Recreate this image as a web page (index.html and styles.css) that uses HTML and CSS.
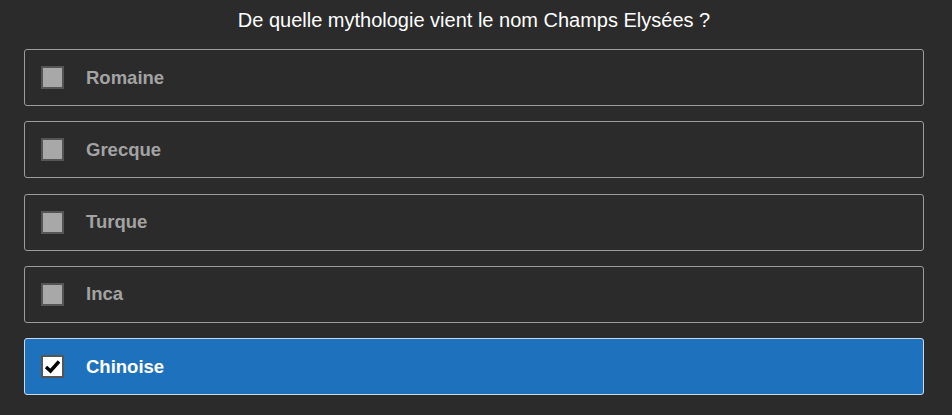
FILE: index.html
```html
<!DOCTYPE html>
<html lang="fr">
<head>
  <meta charset="UTF-8" />
  <title>Quiz</title>
  <link rel="stylesheet" href="styles.css">
</head>
<body>
  <h1 class="question">De quelle mythologie vient le nom Champs Elysées ?</h1>

  <div class="choices">
    <label class="choice"><span class="box"></span> Romaine</label>
    <label class="choice"><span class="box"></span> Grecque</label>
    <label class="choice"><span class="box"></span> Turque</label>
    <label class="choice"><span class="box"></span> Inca</label>
    <label class="choice selected">
      <span class="box">
        <svg width="17" height="15" viewBox="0 0 17 15"><path d="M2 8 L6.5 12 L15 2.5" fill="none" stroke="#000" stroke-width="3.4"/></svg>
      </span> Chinoise
    </label>
  </div>
</body>
</html>
```

FILE: styles.css
```css
body {
  font-family: "Liberation Sans", Arial, sans-serif;
  margin: 0;
  background-color: #2b2b2b;
  color: #fff;
  padding: 8px 28px 0 24px;
}
.question {
  font-size: 20px;
  font-weight: normal;
  text-align: center;
  margin: 0 0 17px 0;
  line-height: 24px;
}
.choices {
  display: flex;
  flex-direction: column;
  gap: 15.25px;
}
.choice {
  display: flex;
  align-items: center;
  height: 55px;
  border: 1px solid #9c9c9c;
  border-radius: 3px;
  padding-left: 16px;
  font-size: 18.5px;
  font-weight: bold;
  color: #a3a3a3;
  cursor: pointer;
}
.box {
  width: 19px;
  height: 19px;
  border: 2px solid #555;
  background-color: #a8a8a8;
  margin-right: 22px;
  display: flex;
  align-items: center;
  justify-content: center;
}
.choice.selected {
  background-color: #1e72bd;
  border-color: #c9d9ea;
  color: #fff;
}
.choice.selected .box {
  background-color: #fff;
}
```
